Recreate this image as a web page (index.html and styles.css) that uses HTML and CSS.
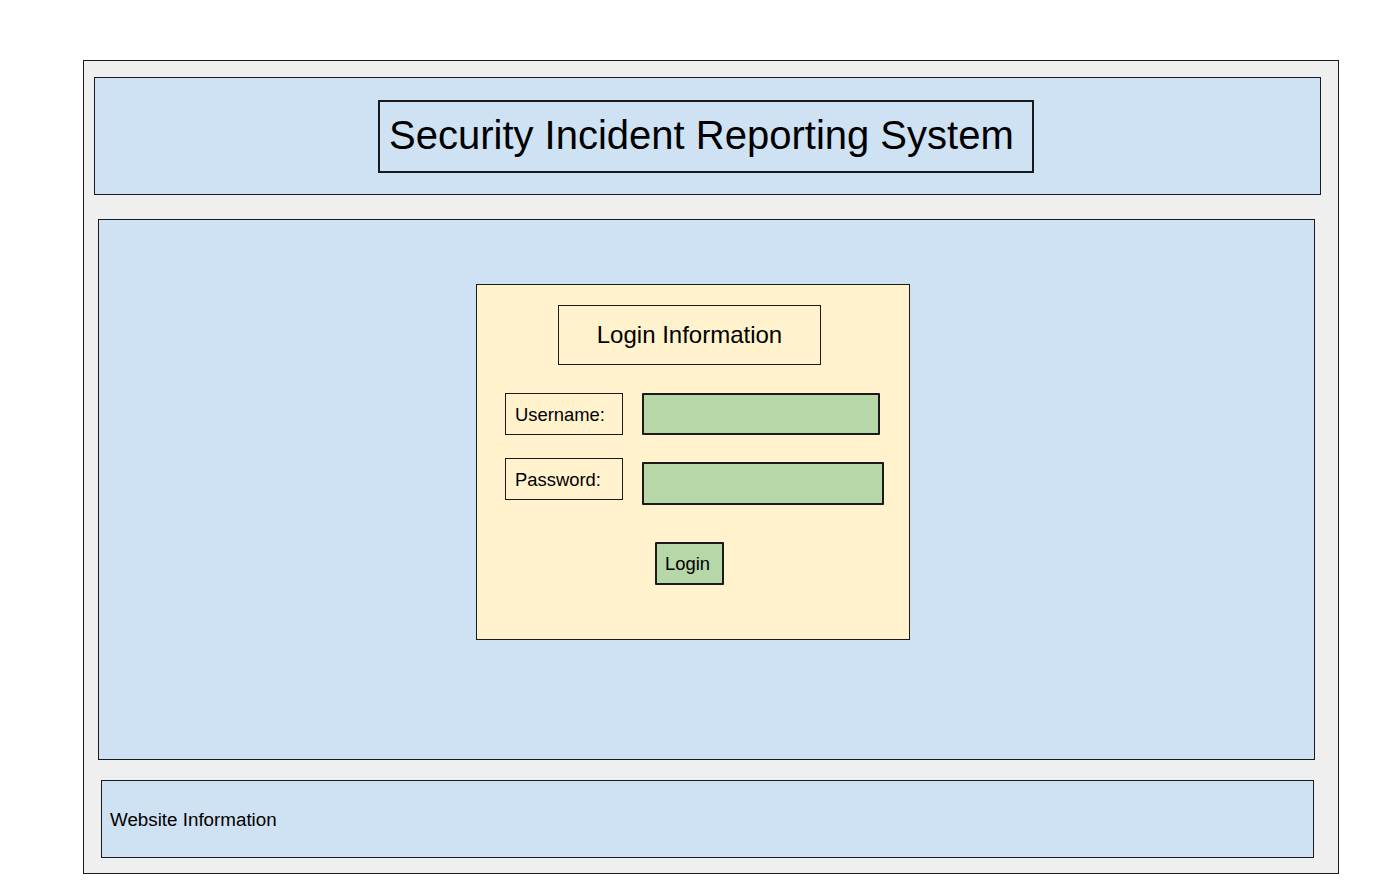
FILE: index.html
```html
<!DOCTYPE html>
<html>
<head>
<meta charset="utf-8">
<link rel="stylesheet" href="styles.css">
<title>Security Incident Reporting System</title>
</head>
<body>
<div class="frame">
  <header class="header">
    <div class="title-box">Security Incident Reporting System</div>
  </header>
  <main class="main">
    <div class="login-card">
      <div class="login-title">Login Information</div>
      <div class="row row-user">
        <div class="label">Username:</div>
        <div class="field field-user"></div>
      </div>
      <div class="row row-pass">
        <div class="label">Password:</div>
        <div class="field field-pass"></div>
      </div>
      <div class="btn">Login</div>
    </div>
  </main>
  <footer class="footer">Website Information</footer>
</div>
</body>
</html>
```
FILE: styles.css
```css
html, body {
  margin: 0;
  padding: 0;
  background: #ffffff;
  font-family: "Liberation Sans", Arial, sans-serif;
  color: #000;
}

.frame {
  box-sizing: border-box;
  margin: 60px 0 0 83px;
  width: 1256px;
  height: 814px;
  background: #efefef;
  border: 1px solid #1a1a1a;
  display: flex;
  flex-direction: column;
  align-items: flex-start;
}

.header {
  box-sizing: border-box;
  margin: 16px 0 0 10px;
  width: 1227px;
  height: 118px;
  background: #cfe2f3;
  border: 1px solid #1a1a1a;
  display: flex;
  align-items: flex-start;
}

.title-box {
  box-sizing: border-box;
  margin: 22px 0 0 283px;
  width: 656px;
  height: 73px;
  border: 2px solid #1a1a1a;
  font-size: 40px;
  line-height: 66px;
  padding-left: 9px;
  white-space: nowrap;
}

.main {
  box-sizing: border-box;
  margin: 24px 0 0 14px;
  width: 1217px;
  height: 541px;
  background: #cfe2f3;
  border: 1px solid #1a1a1a;
  display: flex;
  align-items: flex-start;
}

.login-card {
  box-sizing: border-box;
  margin: 64px 0 0 377px;
  width: 434px;
  height: 356px;
  background: #fff2cc;
  border: 1px solid #1a1a1a;
  display: flex;
  flex-direction: column;
  align-items: flex-start;
}

.login-title {
  box-sizing: border-box;
  margin: 20px 0 0 81px;
  width: 263px;
  height: 60px;
  border: 1px solid #1a1a1a;
  font-size: 24px;
  text-align: center;
  line-height: 58px;
  white-space: nowrap;
}

.row {
  display: flex;
  align-items: flex-start;
  margin-left: 28px;
}

.row-user { margin-top: 28px; }
.row-pass { margin-top: 23px; }

.label {
  box-sizing: border-box;
  width: 118px;
  height: 42px;
  border: 1px solid #1a1a1a;
  font-size: 18.4px;
  line-height: 41px;
  padding-left: 9px;
  white-space: nowrap;
}

.field {
  box-sizing: border-box;
  margin-left: 19px;
  height: 42px;
  background: #b6d7a8;
  border: 2px solid #1a1a1a;
  border-radius: 1px;
}

.field-user { width: 238px; }
.field-pass { width: 242px; height: 43px; margin-top: 4px; }

.btn {
  box-sizing: border-box;
  margin: 37px 0 0 178px;
  width: 69px;
  height: 43px;
  background: #b6d7a8;
  border: 2px solid #1a1a1a;
  border-radius: 1px;
  font-size: 18.4px;
  line-height: 40px;
  padding-left: 8px;
}

.footer {
  box-sizing: border-box;
  margin: 20px 0 0 17px;
  width: 1213px;
  height: 78px;
  background: #cfe2f3;
  border: 1px solid #1a1a1a;
  font-size: 18.8px;
  line-height: 77px;
  padding-left: 8px;
  white-space: nowrap;
}
```
